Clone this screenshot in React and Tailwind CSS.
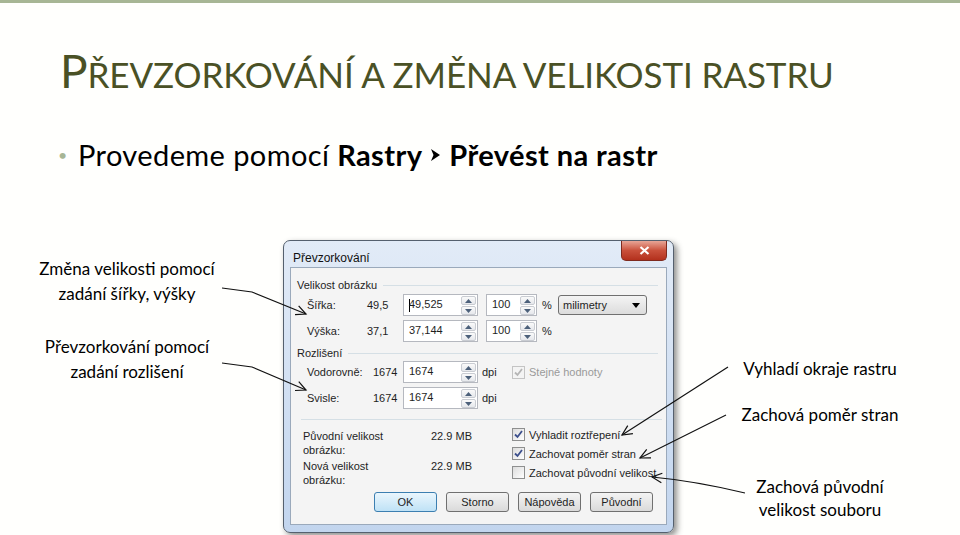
import React from "react";

const slideFont = { fontFamily: "Lato, 'Open Sans', sans-serif" };
const dlgFont = { fontFamily: "'Liberation Sans', Arial, sans-serif" };

function arrowHead(tx, ty, fx, fy, len = 11, spread = 0.45) {
  const a = Math.atan2(ty - fy, tx - fx);
  const p1 = [tx - len * Math.cos(a - spread), ty - len * Math.sin(a - spread)];
  const p2 = [tx - len * Math.cos(a + spread), ty - len * Math.sin(a + spread)];
  return `M${p1[0]} ${p1[1]} L${tx} ${ty} L${p2[0]} ${p2[1]}`;
}

function Callouts() {
  return (
    <svg className="pointer-events-none absolute left-0 top-0" width="960" height="535" fill="none" stroke="#111" strokeWidth="1.2">
      <polyline points="222,288 252,292 306,314" />
      <path d={arrowHead(306, 314, 252, 292)} />
      <polyline points="222,363 252,367 306,390" />
      <path d={arrowHead(306, 390, 252, 367)} />
      <line x1="728" y1="367" x2="622" y2="435" />
      <path d={arrowHead(622, 435, 728, 367)} />
      <line x1="726" y1="415" x2="640" y2="458" />
      <path d={arrowHead(640, 458, 726, 415)} />
      <path d="M745 493 Q695 481 652 477" />
      <path d={arrowHead(652, 477, 690, 481)} />
    </svg>
  );
}

function Spin() {
  return (
    <div className="flex h-[20px] w-[16px] flex-col gap-[1px] pr-[1px] pt-[1px]">
      {["up", "down"].map((d) => (
        <div key={d} className="flex flex-1 items-center justify-center rounded-[2px] border border-[#c9ccd2] bg-linear-to-b from-[#fafafa] to-[#e6e8ec]">
          <svg width="7" height="4" viewBox="0 0 7 4">
            <path d={d === "up" ? "M0 4 L3.5 0 L7 4 Z" : "M0 0 L3.5 4 L7 0 Z"} fill="#4c607a" />
          </svg>
        </div>
      ))}
    </div>
  );
}

function NumInput({ value, w, caret }) {
  return (
    <div className={`flex h-[22px] ${w} items-center border border-[#b5b8bf] bg-white pl-[5px]`}>
      {caret && <span className="mr-[-1px] inline-block h-[13px] w-[1px] bg-black" />}
      <span className="flex-1 pb-[3px]">{value}</span>
      <Spin />
    </div>
  );
}

function Check({ on, disabled }) {
  return (
    <div className={`flex h-[13px] w-[13px] items-center justify-center border ${disabled ? "border-[#c4c4c4] bg-[#f4f4f4]" : "border-[#8e8f8f] bg-linear-to-br from-[#dcdcdc] to-white"}`}>
      {on && (
        <svg width="9" height="9" viewBox="0 0 9 9">
          <path d="M1 4.5 L3.5 7 L8 1" stroke={disabled ? "#b5b5b5" : "#3c4f8c"} strokeWidth="1.8" fill="none" />
        </svg>
      )}
    </div>
  );
}

function Btn({ children, focus }) {
  return (
    <div
      className={`flex h-[20px] w-[63px] items-center justify-center rounded-[3px] border ${
        focus ? "border-[#3c7fb1] bg-linear-to-b from-[#eaf6fd] to-[#bfe2f6]" : "border-[#707070] bg-linear-to-b from-[#f4f4f4] to-[#dadada]"
      }`}
    >
      {children}
    </div>
  );
}

function GroupHead({ children }) {
  return (
    <div className="flex h-[14px] items-center gap-[6px] pl-[6px] pr-[8px]">
      <span>{children}</span>
      <div className="h-0 flex-1 border-t border-[#d5dfe5]" />
    </div>
  );
}

function Dialog() {
  return (
    <div className="w-[400px] shrink-0 pl-[3px] pt-[1px]">
      <div className="flex h-[293px] w-[391px] flex-col rounded-[7px] border border-[#55606e] bg-linear-to-b from-[#e2ebf7] to-[#c2d5ee] px-[6px] pb-[7px] shadow-[3px_3px_6px_rgba(0,0,0,0.45)]" style={dlgFont}>
        <div className="flex h-[26px] items-start justify-between">
          <span className="pl-[3px] pt-[11px] text-[12px] leading-none text-[#111]">Převzorkování</span>
          <div className="flex h-[20px] w-[46px] items-center justify-center rounded-b-[5px] border border-t-0 border-[#7e2a1e] bg-linear-to-b from-[#e7a597] via-[#c9503b] to-[#b3301c]">
            <svg width="11" height="9" viewBox="0 0 11 9">
              <path d="M1.5 1 L9.5 8 M9.5 1 L1.5 8" stroke="#fff" strokeWidth="2.2" />
            </svg>
          </div>
        </div>
        <div className="flex-1 border border-[#9aa9bb] bg-[#f4f4f4] pt-[10px] text-[11px] leading-[14px] text-[#1e1e1e]">
          <GroupHead>Velikost obrázku</GroupHead>

          <div className="mt-[2px] flex h-[22px] items-center">
            <span className="w-[76px] pl-[16px]">Šířka:</span>
            <span className="w-[16px] text-right">49,5</span>
            <div className="w-[20px]" />
            <NumInput value="49,525" w="w-[75px]" caret />
            <div className="w-[8px]" />
            <NumInput value="100" w="w-[51px]" />
            <span className="w-[21px] pl-[5px]">%</span>
            <div className="flex h-[20px] w-[89px] items-center justify-between rounded-[3px] border border-[#707070] bg-linear-to-b from-[#f4f4f4] to-[#dcdcdc] pl-[4px] pr-[6px]">
              <span>milimetry</span>
              <svg width="8" height="5" viewBox="0 0 8 5">
                <path d="M0 0 L8 0 L4 5 Z" fill="#000" />
              </svg>
            </div>
          </div>

          <div className="mt-[4px] flex h-[22px] items-center">
            <span className="w-[76px] pl-[16px]">Výška:</span>
            <span className="w-[16px] text-right">37,1</span>
            <div className="w-[20px]" />
            <NumInput value="37,144" w="w-[75px]" />
            <div className="w-[8px]" />
            <NumInput value="100" w="w-[51px]" />
            <span className="pl-[5px]">%</span>
          </div>

          <div className="mt-[4px]">
            <GroupHead>Rozlišení</GroupHead>
          </div>

          <div className="mt-[1px] flex h-[22px] items-center">
            <span className="w-[82px] pl-[16px]">Vodorovně:</span>
            <span className="w-[24px] text-right">1674</span>
            <div className="w-[6px]" />
            <NumInput value="1674" w="w-[75px]" />
            <span className="w-[34px] pl-[4px]">dpi</span>
            <Check on disabled />
            <span className="pl-[4px] text-[#9a9a9a]">Stejné hodnoty</span>
          </div>

          <div className="mt-[4px] flex h-[22px] items-center">
            <span className="w-[82px] pl-[16px]">Svisle:</span>
            <span className="w-[24px] text-right">1674</span>
            <div className="w-[6px]" />
            <NumInput value="1674" w="w-[75px]" />
            <span className="pl-[4px]">dpi</span>
          </div>

          <div className="ml-[10px] mr-[4px] mt-[10px] border-t border-[#d5dfe5]" />

          <div className="flex">
            <div className="flex w-[221px] flex-col gap-[2px] pl-[12px] pt-[9px]">
              <div className="flex">
                <span className="w-[128px]">
                  Původní velikost
                  <br />
                  obrázku:
                </span>
                <span>22.9 MB</span>
              </div>
              <div className="flex">
                <span className="w-[128px]">
                  Nová velikost
                  <br />
                  obrázku:
                </span>
                <span>22.9 MB</span>
              </div>
            </div>
            <div className="flex flex-col pt-[5px]">
              {[
                ["Vyhladit roztřepení", true],
                ["Zachovat poměr stran", true],
                ["Zachovat původní velikost", false],
              ].map(([t, on]) => (
                <div key={t} className="flex h-[19px] items-center gap-[4px]">
                  <Check on={on} />
                  <span>{t}</span>
                </div>
              ))}
            </div>
          </div>

          <div className="mt-[5px] flex gap-[9px] pl-[83px]">
            <Btn focus>OK</Btn>
            <Btn>Storno</Btn>
            <Btn>Nápověda</Btn>
            <Btn>Původní</Btn>
          </div>
        </div>
      </div>
    </div>
  );
}

export default function App() {
  return (
    <div className="relative h-[535px] w-[960px] overflow-hidden bg-[#fffffd] text-black" style={slideFont}>
      <div className="h-[3px] bg-[#a7b695]" />

      <div className="mt-[45px] pl-[60px] text-[46px] font-normal leading-none tracking-[-0.1px] text-[#4a5125]">
        P<span className="text-[35px]">ŘEVZORKOVÁNÍ A ZMĚNA VELIKOSTI RASTRU</span>
      </div>

      <div className="mt-[46px] flex items-center pl-[58px] text-[29px] leading-none tracking-[0.4px]">
        <span className="w-[20px] text-[16px] text-[#a7b695]">•</span>
        <span>Provedeme pomocí&nbsp;</span>
        <span className="font-bold">Rastry</span>
        <svg className="mx-[9px]" width="9" height="12" viewBox="0 0 9 12">
          <path d="M0 0 L9 6 L0 12 L2.5 6 Z" fill="#000" />
        </svg>
        <span className="font-bold">Převést na rastr</span>
      </div>

      <div className="mt-[70px] flex">
        <div className="flex w-[280px] flex-col gap-[28px] pr-[26px] pt-[17px] text-center text-[17px] leading-[25px]">
          <div>
            Změna velikosti pomocí
            <br />
            zadání šířky, výšky
          </div>
          <div>
            Převzorkování pomocí
            <br />
            zadání rozlišení
          </div>
        </div>

        <Dialog />

        <div className="flex w-[280px] flex-col text-center text-[17px] leading-[25px]">
          <div className="mt-[117px]">Vyhladí okraje rastru</div>
          <div className="mt-[21px]">Zachová poměr stran</div>
          <div className="mt-[48px] leading-[23px]">
            Zachová původní
            <br />
            velikost souboru
          </div>
        </div>
      </div>

      <Callouts />
    </div>
  );
}
